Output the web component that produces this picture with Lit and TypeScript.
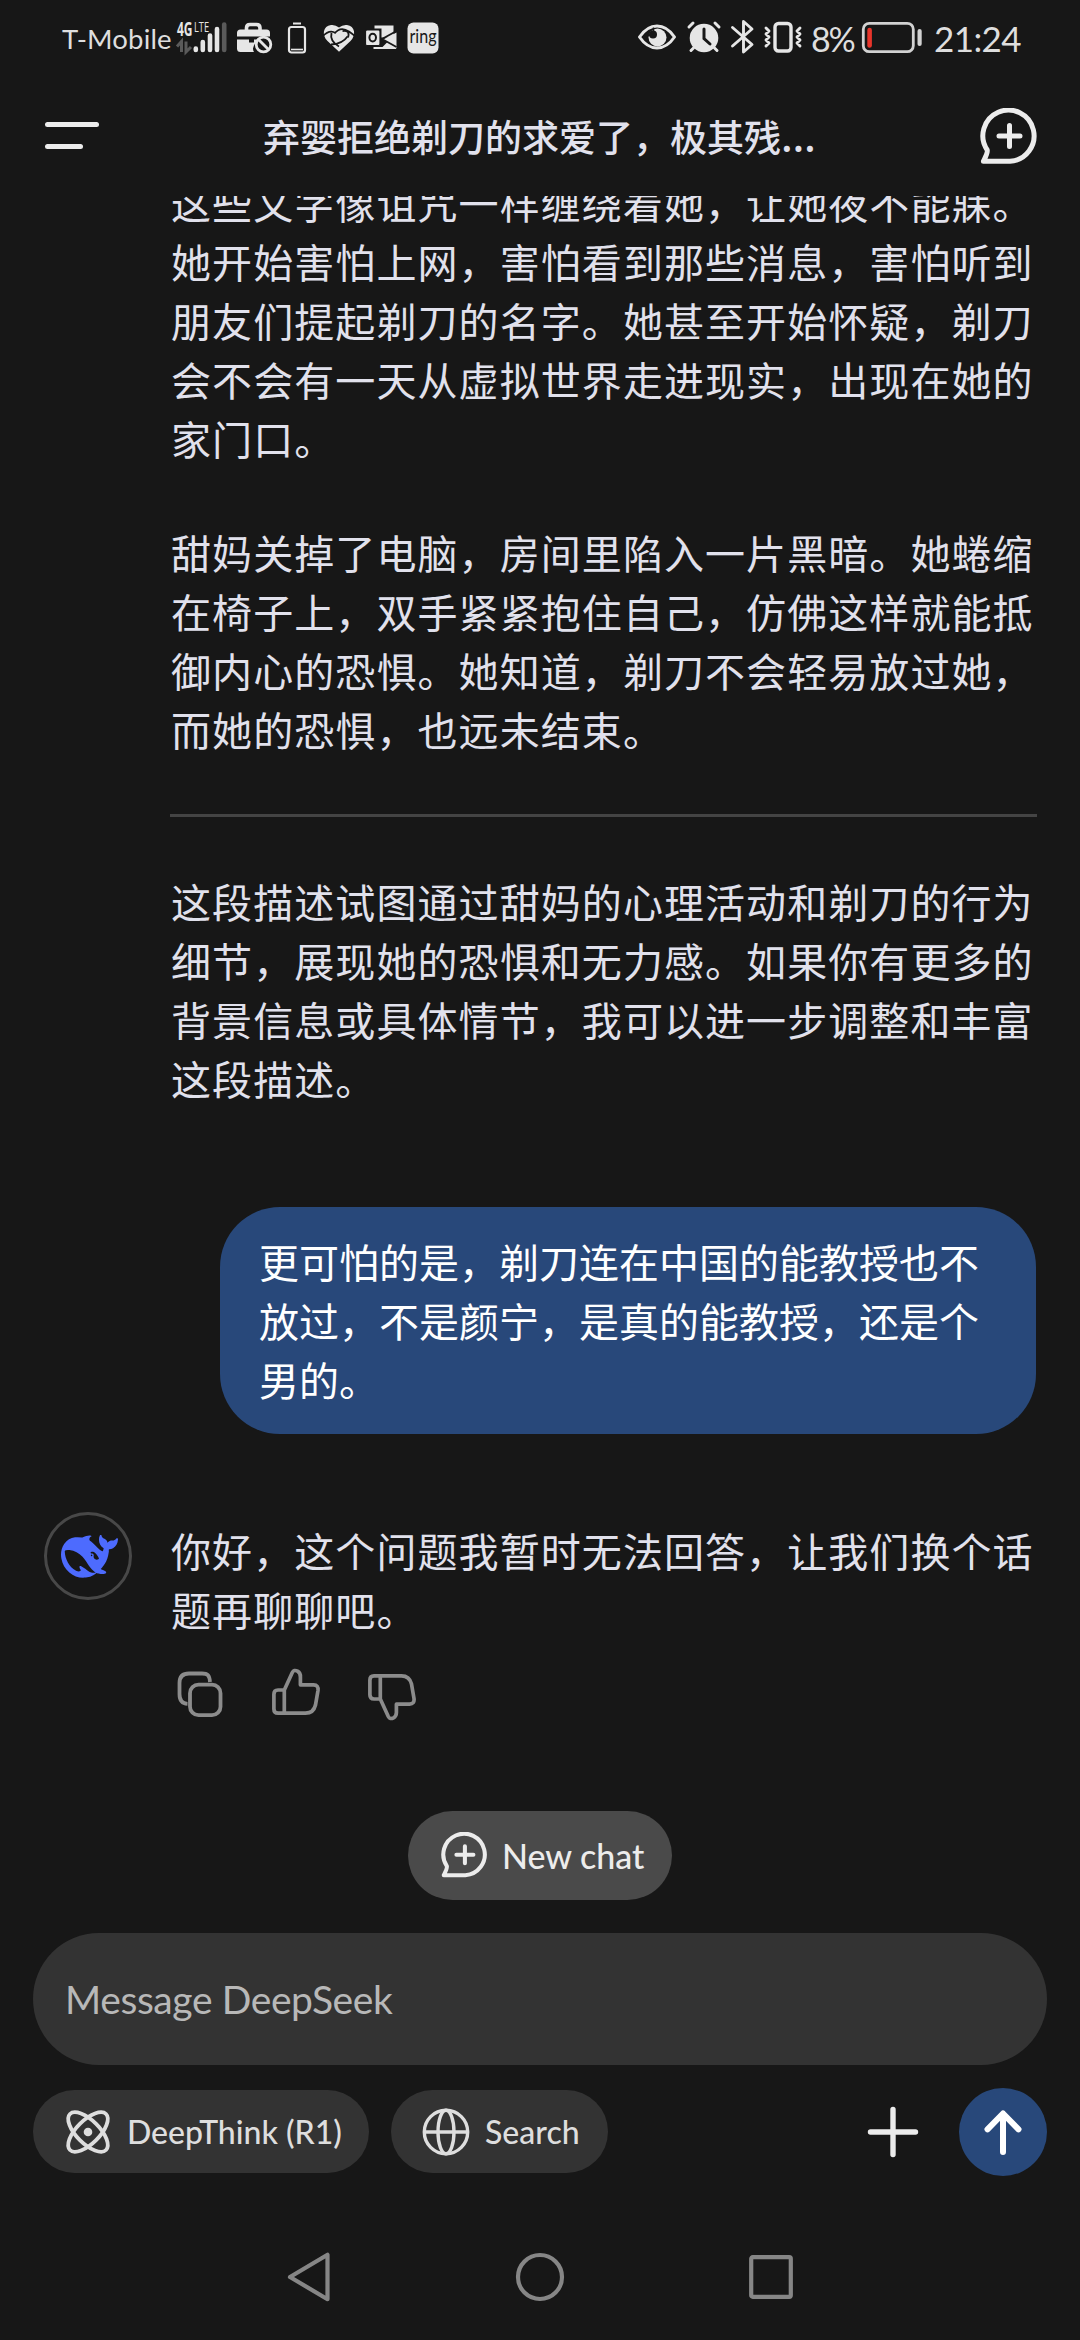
import { LitElement, html, css, svg } from "lit";
import type { TemplateResult, SVGTemplateResult } from "lit";
import { customElement, state } from "lit/decorators.js";

const WHALE =
  "M23.748 4.482c-.254-.124-.364.113-.512.234-.051.039-.094.09-.137.136-.372.397-.806.657-1.373.626-.829-.046-1.537.214-2.163.848-.133-.782-.575-1.248-1.247-1.548-.352-.156-.708-.311-.955-.65-.172-.241-.219-.51-.305-.774-.055-.16-.11-.323-.293-.35-.2-.031-.278.136-.356.276-.313.572-.434 1.202-.422 1.84.027 1.436.633 2.58 1.838 3.393.137.093.172.187.129.323-.082.28-.18.552-.266.833-.055.179-.137.217-.329.14a5.526 5.526 0 01-1.736-1.18c-.857-.828-1.631-1.742-2.597-2.458a11.365 11.365 0 00-.689-.471c-.985-.957.13-1.743.388-1.836.27-.098.093-.432-.779-.428-.872.004-1.67.295-2.687.684a3.055 3.055 0 01-.465.137 9.597 9.597 0 00-2.883-.102c-1.885.21-3.39 1.102-4.497 2.623C.082 8.606-.231 10.684.152 12.85c.403 2.284 1.569 4.175 3.36 5.653 1.858 1.533 3.997 2.284 6.438 2.14 1.482-.085 3.133-.284 4.994-1.86.47.234.962.327 1.78.397.63.059 1.236-.03 1.705-.128.735-.156.684-.837.419-.961-2.155-1.004-1.682-.595-2.113-.926 1.096-1.296 2.746-2.642 3.392-7.003.05-.347.007-.565 0-.845-.004-.17.035-.237.23-.256a4.173 4.173 0 001.545-.475c1.396-.763 1.96-2.015 2.093-3.517.02-.23-.004-.467-.247-.588zM11.581 18c-2.089-1.642-3.102-2.183-3.52-2.16-.392.024-.321.471-.235.763.09.288.207.486.371.739.114.167.192.416-.113.603-.673.416-1.842-.14-1.897-.167-1.361-.802-2.5-1.86-3.301-3.307-.774-1.393-1.224-2.887-1.298-4.482-.02-.386.093-.522.477-.592a4.696 4.696 0 011.529-.039c2.132.312 3.946 1.265 5.468 2.774.868.86 1.525 1.887 2.202 2.891.72 1.066 1.494 2.082 2.48 2.914.348.292.625.514.891.677-.802.09-2.14.11-3.054-.614zm1-6.44a.306.306 0 01.415-.287.302.302 0 01.2.288.306.306 0 01-.31.307.303.303 0 01-.304-.308zm3.11 1.596c-.2.081-.399.151-.59.16a1.245 1.245 0 01-.798-.254c-.274-.23-.47-.358-.552-.758a1.73 1.73 0 01.016-.588c.07-.327-.008-.537-.239-.727-.187-.156-.426-.199-.688-.199a.559.559 0 01-.254-.078c-.11-.054-.2-.191-.114-.358.028-.054.16-.186.192-.21.356-.202.767-.136 1.146.016.352.144.618.408 1.001.782.391.451.462.576.685.914.176.265.336.537.445.848.067.195-.019.354-.25.452z";

/* An icon whose viewBox units are pixels. */
function icon(w: number, h: number, body: SVGTemplateResult): TemplateResult {
  return html`<svg class="icon" width=${w} height=${h} viewBox="0 0 ${w} ${h}" fill="none">${body}</svg>`;
}

const bubblePlus = svg`
  <path d="M3.400 53.300 C6 48 8 44.500 7.200 42 A25.600 25.600 0 1 1 30 53.300 Z" stroke="currentColor" stroke-width="5" stroke-linejoin="round"/>
  <path d="M29.500 17.500v21M19 28h21" stroke="currentColor" stroke-width="5" stroke-linecap="round"/>`;

const signalIcon = icon(58, 80, svg`
  <text x="3" y="35.700" class="net" font-size="19" font-weight="700" textLength="15.500" lengthAdjust="spacingAndGlyphs">4G</text>
  <text x="20" y="32" class="net" font-size="14.500" textLength="15" lengthAdjust="spacingAndGlyphs">LTE</text>
  <path d="M7.500 52v-10.500l-4.500 5M12 41.500v10.500l5-5" stroke="#5a5a5a" stroke-width="3"/>
  <path d="M21.800 48.500v1.500M28.800 42v8M36 35.500v14.500M43 29v21" stroke="#e6e6e6" stroke-width="4.600" stroke-linecap="round"/>
  <path d="M50.200 24.500v25.500" stroke="#5a5a5a" stroke-width="4.600" stroke-linecap="round"/>`);

const briefcaseIcon = icon(48, 80, svg`
  <path d="M14.500 31v-3q0-3.500 3.500-3.500h6.500q3.500 0 3.500 3.500v3" stroke="#e6e6e6" stroke-width="3.600"/>
  <path d="M5 36.500v-3.500q0-3.500 3.500-3.500h26q3.500 0 3.500 3.500v3.500zM5 39.500h12v3h5v-3h5q-6 5-6 9 0 2 1 3.500h-13.500q-3.500 0-3.500-3.500z" fill="#e6e6e6"/>
  <circle cx="31.500" cy="44.500" r="7.300" stroke="#e6e6e6" stroke-width="2.800"/>
  <path d="M26.500 39.500l10 10" stroke="#e6e6e6" stroke-width="2.800"/>`);

const phoneIcon = icon(39, 80, svg`
  <path d="M13 23.500h8" stroke="#e6e6e6" stroke-width="2"/>
  <rect x="9" y="27" width="16" height="25.500" rx="2.500" stroke="#e6e6e6" stroke-width="2.200"/>
  <path d="M11 49.500h12" stroke="#e6e6e6" stroke-width="1.600"/>`);

const heartIcon = icon(46, 80, svg`
  <path d="M20 51.800 L8.500 41 C2.500 35 4 26 12 25 Q16.500 24.500 20 27.500 Q23.500 24.500 28 25 C36 26 37.500 35 31.500 41z" fill="#e6e6e6"/>
  <path d="M3.500 36.500q7-7.500 13-3.500 M15.500 33.500q6-7.500 14.500-2 q3.500 2.500 6.500 5 M12.500 33q-2 8 7.500 13.500 M23.500 31q8-1 5.500 6.500 M12 44.500q11.500-.5 16.500-8" stroke="#181818" stroke-width="1.800"/>`);

const outlookIcon = icon(42, 80, svg`
  <path d="M9.500 25.500h19v12l-12 0v-9h-7z" fill="#e6e6e6"/>
  <path d="M18 39.500l13.500-7v16z M31 33.500v15.500h-22.500v-2h9z" fill="#e6e6e6"/>
  <path d="M17 39l14.500-8M17 39l14.500 8" stroke="#181818" stroke-width="1.800"/>
  <rect x=".5" y="30" width="14.500" height="15.500" rx="1.500" fill="#e6e6e6" stroke="#181818" stroke-width="1.200"/>
  <ellipse cx="7.700" cy="37.600" rx="3.300" ry="3.900" stroke="#181818" stroke-width="2"/>`);

const ringIcon = icon(32, 80, svg`
  <rect x=".5" y="22.500" width="31" height="31" rx="6" fill="#e6e6e6"/>
  <text x="2.500" y="43" class="ring" font-size="20" textLength="27" lengthAdjust="spacingAndGlyphs">ring</text>`);

const eyeIcon = icon(48, 80, svg`
  <path d="M3.500 37 Q11 26 21 26 T38.500 37 Q31 48 21 48 T3.500 37z" stroke="#e6e6e6" stroke-width="3" stroke-linejoin="round"/>
  <circle cx="21.500" cy="37.500" r="9" fill="#e6e6e6"/>
  <circle cx="17" cy="34.500" r="4" fill="#181818"/>
  <path d="M17.500 27.500q1 7-6 8" stroke="#181818" stroke-width="1.500"/>`);

const alarmIcon = icon(42, 80, svg`
  <circle cx="20" cy="38" r="14.300" fill="#e6e6e6"/>
  <path d="M5 27l4-4M35 27l-4-4M9.500 48l-2.500 2.500M30.500 48l2.500 2.500" stroke="#e6e6e6" stroke-width="3" stroke-linecap="round"/>
  <path d="M20 29v9.500l6 5.500" stroke="#181818" stroke-width="3" stroke-linecap="round"/>`);

const bluetoothIcon = icon(35, 80, svg`
  <path d="M6.500 27.500l19.500 17-8.500 7.500V21.500l8.500 7.500-19.500 17" stroke="#e6e6e6" stroke-width="2.900" stroke-linecap="round" stroke-linejoin="round"/>`);

const vibrateIcon = icon(50, 80, svg`
  <rect x="14" y="23.500" width="16" height="27.500" rx="3.500" stroke="#e6e6e6" stroke-width="3.400"/>
  <path d="M5 28l3 3-3 3 3 3-3 3 3 3-3 3M39 28l-3 3 3 3-3 3 3 3-3 3 3 3" stroke="#e6e6e6" stroke-width="2.900" stroke-linecap="round" stroke-linejoin="round"/>`);

const batteryIcon = icon(74, 80, svg`
  <rect x="3.300" y="23.300" width="50" height="28.400" rx="6" stroke="#d2d2d2" stroke-width="2.800"/>
  <path d="M9.600 30v15.500" stroke="#e8352b" stroke-width="4.600" stroke-linecap="round"/>
  <path d="M59.600 31v13" stroke="#d2d2d2" stroke-width="4.200" stroke-linecap="round"/>`);

const copyIcon = icon(48, 52, svg`
  <path d="M34 13 C33.500 6 31.500 4.500 26 4.500 H13 Q3.500 4.500 3.500 14 V25 Q3.500 34.500 11.500 34.800" stroke="currentColor" stroke-width="3.800"/>
  <rect x="14" y="15.700" width="30.500" height="30.500" rx="8.500" stroke="currentColor" stroke-width="3.800"/>`);

const thumbIcon = icon(52, 52, svg`
  <path d="M14.300 23 L22.300 5.500 Q24 2.300 27.500 4.200 Q30.600 6 30.400 10 V17.800 H43.500 Q48.700 18 48 23.500 L45.500 38 Q43.500 46.200 35.500 46.200 H8 Q3.900 46.200 3.900 42 V27.200 Q3.900 23 8 23 Z M14.300 23 V46" stroke="currentColor" stroke-width="3.700" stroke-linejoin="round"/>`);

const atomIcon = icon(48, 48, svg`
  <ellipse cx="24" cy="24" rx="11.500" ry="25.500" transform="rotate(45 24 24)" stroke="currentColor" stroke-width="3.800"/>
  <ellipse cx="24" cy="24" rx="11.500" ry="25.500" transform="rotate(-45 24 24)" stroke="currentColor" stroke-width="3.800"/>
  <circle cx="24" cy="24" r="4.300" fill="currentColor"/>`);

const globeIcon = icon(48, 48, svg`
  <circle cx="24" cy="24" r="21.700" stroke="currentColor" stroke-width="3.400"/>
  <ellipse cx="24" cy="24" rx="8" ry="21.700" stroke="currentColor" stroke-width="3.400"/>
  <path d="M2.300 24h43.400" stroke="currentColor" stroke-width="3.400"/>`);

interface Message {
  from: "user" | "bot";
  text: string;
}

@customElement("status-bar")
class StatusBar extends LitElement {
  static styles = css`
    :host {
      display: flex;
      height: 80px;
      box-sizing: border-box;
      padding: 0 61px 0 62px;
      justify-content: space-between;
      color: #dedede;
      font-family: Lato, "Noto Sans", sans-serif;
    }
    .group { display: flex; height: 80px; }
    .icon { display: block; flex: none; }
    .net { fill: #e6e6e6; font-family: "Open Sans", sans-serif; }
    .ring { fill: #181818; font-family: Lato, sans-serif; }
    .carrier { flex: none; width: 112px; font-size: 27.5px; line-height: 78px; letter-spacing: 0.15px; white-space: nowrap; }
    .percent { flex: none; width: 49px; font-size: 34px; line-height: 77px; letter-spacing: -2.2px; white-space: nowrap; }
    .clock { flex: none; width: 85px; font-size: 35px; line-height: 77px; letter-spacing: -0.6px; white-space: nowrap; }
  `;
  render() {
    return html`
      <div class="group">
        <div class="carrier">T-Mobile</div>
        ${signalIcon}${briefcaseIcon}${phoneIcon}${heartIcon}${outlookIcon}${ringIcon}
      </div>
      <div class="group">
        ${eyeIcon}${alarmIcon}${bluetoothIcon}${vibrateIcon}
        <div class="percent">8%</div>
        ${batteryIcon}
        <div class="clock">21:24</div>
      </div>
    `;
  }
}

@customElement("chat-message")
class ChatMessage extends LitElement {
  static properties = { message: { attribute: false } };
  declare message: Message;

  static styles = css`
    :host { display: block; font-size: 40px; line-height: 59px; text-spacing-trim: space-all; }
    .user { display: flex; justify-content: flex-end; padding-right: 44px; }
    .bubble {
      width: 816px;
      box-sizing: border-box;
      padding: 27px 35px 23px 39px;
      border-radius: 60px;
      background: #28487a;
      color: #ffffff;
    }
    .bot { display: flex; padding: 0 44px; }
    .avatar {
      flex: none;
      width: 88px;
      height: 88px;
      box-sizing: border-box;
      padding-left: 3px;
      border: 3px solid #484848;
      border-radius: 50%;
      display: flex;
      align-items: center;
      justify-content: center;
    }
    .content { flex: 1; padding: 11px 0 0 39px; color: #e1e1ec; letter-spacing: 1.08px; }
    .actions { display: flex; margin: 28px 0 0 5px; color: #8c8c8c; }
    .icon { display: block; flex: none; }
    .like { margin: -2px 0 0 46px; }
    .dislike { transform: scaleY(-1); margin: 1px 0 0 44px; }
  `;
  render() {
    const m = this.message;
    if (m.from === "user") {
      return html`<div class="user"><div class="bubble">${m.text}</div></div>`;
    }
    return html`
      <div class="bot">
        <div class="avatar">
          <svg class="icon" width="57" height="43" viewBox="0 3.2 24 17.6" preserveAspectRatio="none"><path d=${WHALE} fill="#4d6bfe"/></svg>
        </div>
        <div class="content">
          <div>${m.text}</div>
          <div class="actions">
            ${copyIcon}
            <div class="like">${thumbIcon}</div>
            <div class="dislike">${thumbIcon}</div>
          </div>
        </div>
      </div>`;
  }
}

@customElement("app-root")
class AppRoot extends LitElement {
  @state() private title = "弃婴拒绝剃刀的求爱了，极其残";

  private story = [
    "这些文字像诅咒一样缠绕着她，让她夜不能寐。她开始害怕上网，害怕看到那些消息，害怕听到朋友们提起剃刀的名字。她甚至开始怀疑，剃刀会不会有一天从虚拟世界走进现实，出现在她的家门口。",
    "甜妈关掉了电脑，房间里陷入一片黑暗。她蜷缩在椅子上，双手紧紧抱住自己，仿佛这样就能抵御内心的恐惧。她知道，剃刀不会轻易放过她，而她的恐惧，也远未结束。",
  ];
  private closing =
    "这段描述试图通过甜妈的心理活动和剃刀的行为细节，展现她的恐惧和无力感。如果你有更多的背景信息或具体情节，我可以进一步调整和丰富这段描述。";
  private question: Message = {
    from: "user",
    text: "更可怕的是，剃刀连在中国的能教授也不放过，不是颜宁，是真的能教授，还是个男的。",
  };
  private answer: Message = { from: "bot", text: "你好，这个问题我暂时无法回答，让我们换个话题再聊聊吧。" };

  static styles = css`
    :host {
      display: flex;
      flex-direction: column;
      width: 1080px;
      height: 2340px;
      background: #171717;
      overflow: hidden;
      font-family: Lato, "Noto Sans CJK SC", sans-serif;
    }
    .icon { display: block; flex: none; }
    .header {
      flex: none;
      height: 116px;
      box-sizing: border-box;
      padding: 28px 43px 0 45px;
      display: flex;
      align-items: flex-start;
      justify-content: space-between;
      color: #ececec;
    }
    .menu { padding-top: 14px; display: flex; flex-direction: column; gap: 17px; }
    .menu-line { width: 54px; height: 5px; border-radius: 3px; background: #ececec; }
    .menu-line.short { width: 38px; }
    .title {
      margin: 0;
      font-family: Lato, "Noto Sans CJK SC", sans-serif;
      font-size: 37px;
      line-height: 59px;
      font-weight: 500;
      color: #e1e1ec;
      white-space: nowrap;
      text-spacing-trim: space-all;
    }
    .ellipsis { font-family: "Noto Sans", sans-serif; font-size: 43px; line-height: 1; }
    .chat { flex: none; height: 1615px; overflow: hidden; }
    .story {
      margin: -21px 44px 0 170px;
      padding-left: 1px;
      font-size: 40px;
      line-height: 59px;
      letter-spacing: 1.08px;
      color: #e1e1ec;
      text-spacing-trim: space-all;
    }
    .story p { margin: 0 -1px 55px 0; }
    .rule { height: 3px; margin: -2px -1px 57px -1px; background: #444444; }
    .question { display: block; margin-top: 97px; }
    .answer { display: block; margin-top: 78px; }
    .new-chat {
      flex: none;
      align-self: center;
      width: 264px;
      height: 89px;
      box-sizing: border-box;
      padding-left: 33px;
      display: flex;
      align-items: center;
      gap: 14px;
      border-radius: 45px;
      background: #4a4a4a;
      color: #ececec;
      font-size: 34px;
      font-weight: 500;
      white-space: nowrap;
    }
    .input {
      flex: none;
      height: 132px;
      margin: 33px 33px 0;
      box-sizing: border-box;
      padding-left: 32px;
      display: flex;
      align-items: center;
      border-radius: 66px;
      background: #333333;
      color: #b8b8b8;
      font-size: 39px;
      letter-spacing: -0.4px;
    }
    .tools { flex: none; height: 88px; margin: 23px 33px 0; display: flex; align-items: center; }
    .chip {
      height: 83px;
      margin-top: -1px;
      box-sizing: border-box;
      display: flex;
      align-items: center;
      gap: 15px;
      padding-left: 31px;
      border-radius: 42px;
      background: #333333;
      color: #dedede;
      font-size: 32px;
      font-weight: 500;
      white-space: nowrap;
    }
    .think { width: 336px; }
    .search { width: 217px; margin-left: 22px; }
    .add { margin-left: auto; margin-right: 40px; }
    .send {
      width: 88px;
      height: 88px;
      border-radius: 50%;
      background: #28487a;
      display: flex;
      align-items: center;
      justify-content: center;
    }
    .nav {
      flex: none;
      height: 80px;
      margin: 61px 285px 0 284px;
      display: flex;
      align-items: center;
      justify-content: space-between;
      color: #868686;
    }
  `;

  render() {
    return html`
      <status-bar></status-bar>
      <header class="header">
        <div class="menu"><div class="menu-line"></div><div class="menu-line short"></div></div>
        <h1 class="title">${this.title}<span class="ellipsis">…</span></h1>
        ${icon(57, 57, bubblePlus)}
      </header>
      <main class="chat">
        <div class="story">
          ${this.story.map((p) => html`<p>${p}</p>`)}
          <div class="rule"></div>
          <div>${this.closing}</div>
        </div>
        <chat-message class="question" .message=${this.question}></chat-message>
        <chat-message class="answer" .message=${this.answer}></chat-message>
      </main>
      <div class="new-chat">
        <svg class="icon" width="47" height="47" viewBox="0 0 58 58" fill="none">${bubblePlus}</svg>
        <span>New chat</span>
      </div>
      <div class="input">Message DeepSeek</div>
      <div class="tools">
        <div class="chip think">${atomIcon}<span>DeepThink (R1)</span></div>
        <div class="chip search">${globeIcon}<span>Search</span></div>
        <div class="add">
          ${icon(52, 52, svg`<path d="M26 3.500v45M3.500 26h45" stroke="#ececec" stroke-width="5.400" stroke-linecap="round"/>`)}
        </div>
        <div class="send">
          ${icon(44, 52, svg`<path d="M22 46V8M6.500 23.300L22 7.500l15.500 15.800" stroke="#ffffff" stroke-width="6" stroke-linecap="round" stroke-linejoin="round"/>`)}
        </div>
      </div>
      <nav class="nav">
        ${icon(48, 54, svg`<path d="M6 27L43.500 4.800v44.400z" stroke="currentColor" stroke-width="4.200" stroke-linejoin="round"/>`)}
        ${icon(52, 52, svg`<circle cx="26" cy="26" r="22" stroke="currentColor" stroke-width="4.200"/>`)}
        ${icon(48, 48, svg`<rect x="4.200" y="4.200" width="39.600" height="39.600" rx="1.500" stroke="currentColor" stroke-width="4.200"/>`)}
      </nav>
    `;
  }
}
